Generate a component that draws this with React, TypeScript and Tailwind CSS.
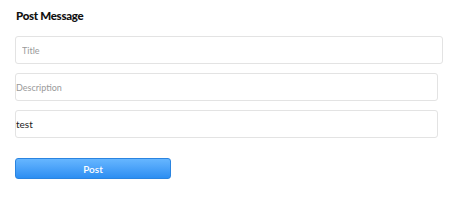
import React, { useState } from "react";

export default function App() {
  const [title, setTitle] = useState("");
  const [desc, setDesc] = useState("");
  const [body, setBody] = useState("test");

  return (
    <main className="w-[474px] h-[208px] bg-white pl-[15px] pt-[8px] font-['Lato','Liberation_Sans',sans-serif]">
      <h1 className="text-[11.5px] font-black text-[#111] leading-[16px] pl-[1px] tracking-[-0.3px]">Post Message</h1>

      <div className="mt-[12px] flex flex-col gap-[9px]">
        <input
          className="w-[428px] h-[28px] rounded-[3px] border border-[#e3e3e3] px-[6px] text-[9px] text-[#333] placeholder:text-[#9a9a9a] outline-none"
          value={title}
          onChange={(e) => setTitle(e.target.value)}
          placeholder="Title"
        />
        <input
          className="w-[423px] h-[28px] rounded-[3px] border border-[#e3e3e3] px-0 text-[9px] text-[#333] placeholder:text-[#9a9a9a] outline-none"
          value={desc}
          onChange={(e) => setDesc(e.target.value)}
          placeholder="Description"
        />
        <input
          className="w-[423px] h-[28px] rounded-[3px] border border-[#e3e3e3] px-0 text-[10px] text-[#222] outline-none"
          value={body}
          onChange={(e) => setBody(e.target.value)}
        />
      </div>

      <button
        type="button"
        className="mt-[20px] w-[156px] h-[21px] rounded-[3px] border border-[#2a84e0] bg-gradient-to-b from-[#66b6ff] to-[#2b8ef2] text-white text-[10px] font-semibold leading-none"
      >
        Post
      </button>
    </main>
  );
}
